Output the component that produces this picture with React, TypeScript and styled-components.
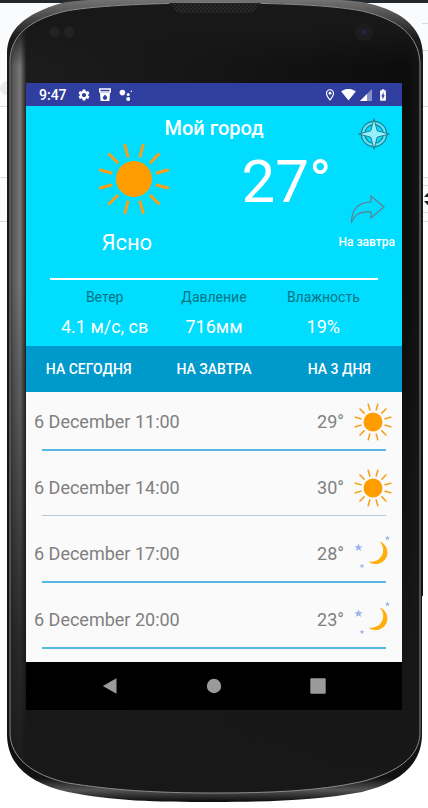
import React from "react";
import styled, { createGlobalStyle } from "styled-components";
import { MdSettings, MdOutlineLocationOn, MdSignalWifi4Bar, MdBatteryChargingFull } from "react-icons/md";

const GlobalStyle = createGlobalStyle`
  *, *::before, *::after { box-sizing: border-box; }
  body { margin: 0; background: #fff; font-family: Roboto, "Noto Sans", sans-serif; }
  button { font: inherit; color: inherit; border: 0; padding: 0; background: none; cursor: pointer; }
  svg { display: block; }
`;

const Device = styled.div`
  position: relative;
  min-height: 100vh;
  padding: 83px 26px 98px;
`;

const ShellArt = styled.svg`
  position: absolute;
  inset: 0;
  width: 100%;
  height: 100%;
`;

const Screen = styled.main`
  position: relative;
  display: flex;
  flex-direction: column;
  background: #fafafa;
`;

const StatusBar = styled.header`
  display: flex;
  align-items: center;
  justify-content: space-between;
  height: 23px;
  padding: 0 12px 0 13px;
  background: #303f9f;
  color: #fff;
`;

const StatusGroup = styled.div<{ $gap: number }>`
  display: flex;
  align-items: center;
  gap: ${(p) => p.$gap}px;
`;

const Clock = styled.time`
  font-size: 14px;
  font-weight: 500;
  line-height: 20px;
  margin-right: 2px;
`;

const Hero = styled.section`
  background: #00ddff;
  color: #fff;
`;

const Current = styled.div`
  display: grid;
  grid-template-columns: 220fr 84fr 72fr;
  grid-template-rows: 37px 135px;
`;

const City = styled.h1`
  grid-area: 1 / 1 / 2 / 4;
  margin: 0;
  padding-top: 8px;
  font-size: 20px;
  font-weight: 500;
  line-height: 28px;
  text-align: center;
`;

const Condition = styled.div`
  grid-area: 2 / 1;
  display: flex;
  flex-direction: column;
  align-items: center;
  gap: 14px;
`;

const ConditionName = styled.p`
  margin: 0;
  padding-right: 14px;
  font-size: 22px;
  line-height: 28px;
`;

const Temperature = styled.p`
  grid-area: 2 / 2;
  margin: 0;
  font-size: 60px;
  line-height: 78px;
  text-align: center;
  white-space: nowrap;
`;

const Actions = styled.div`
  grid-area: 1 / 3 / 3 / 4;
  display: flex;
  flex-direction: column;
  align-items: center;
  gap: 44px;
  padding-top: 12px;
`;

const LocateButton = styled.button`
  align-self: flex-end;
  margin-right: 12px;
`;

const TomorrowButton = styled.button`
  display: flex;
  flex-direction: column;
  align-items: center;
  gap: 10px;
  font-size: 12px;
  font-weight: 500;
  line-height: 16px;
  white-space: nowrap;
`;

const Stats = styled.dl`
  display: grid;
  grid-template-columns: repeat(3, 1fr);
  margin: 0 24px;
  padding: 7px 0;
  border-top: 2px solid #fff;
  text-align: center;
`;

const Stat = styled.div`
  white-space: nowrap;
`;

const StatLabel = styled.dt`
  color: #077484;
  font-size: 14px;
  line-height: 20px;
`;

const StatValue = styled.dd`
  margin: 8px 0 0;
  font-size: 18px;
  line-height: 24px;
`;

const Tabs = styled.nav`
  display: grid;
  grid-template-columns: repeat(3, 1fr);
  height: 46px;
  background: #0099cc;
`;

const Tab = styled.button`
  color: #fff;
  font-size: 14px;
  font-weight: 500;
  line-height: 20px;
`;

const Forecast = styled.ul`
  list-style: none;
  margin: 0;
  padding: 0 0 6px;
`;

const ForecastItem = styled.li`
  height: 66px;
`;

const ForecastRow = styled.div`
  display: flex;
  align-items: center;
  height: 57px;
  padding: 2px 10px 0 8px;
  color: #808080;
  font-size: 18px;
  line-height: 24px;
`;

const Moment = styled.time`
  flex: 1;
`;

const Degrees = styled.span`
  margin-right: 10px;
`;

const Rule = styled.div<{ $soft: boolean }>`
  height: ${(p) => (p.$soft ? 1 : 2)}px;
  margin: 0 16px;
  background: ${(p) => (p.$soft ? "#b4cbd8" : "#58b9e0")};
`;

const NavBar = styled.footer`
  display: flex;
  justify-content: center;
  height: 48px;
  background: #000;
`;

const NavButton = styled.button`
  display: grid;
  place-items: center;
  width: 104px;
`;

const Sun = ({ size }: { size: number }) => (
  <svg width={size} height={size} viewBox="0 0 72 72" aria-hidden="true">
    <circle cx="36" cy="36" r="18" fill="#ff9d00" />
    <g stroke="#f5a01c" strokeWidth="3">
      {Array.from({ length: 12 }, (_, i) => (
        <line key={i} x1="36" y1="0" x2="36" y2="13.5" transform={`rotate(${15 + i * 30} 36 36)`} />
      ))}
    </g>
  </svg>
);

const STAR = "M0-5 L1.3-1.6 L5-1.5 L2.1.7 L3.1 4.2 L0 2.2 L-3.1 4.2 L-2.1.7 L-5-1.5 L-1.3-1.6Z";

const Moon = ({ size }: { size: number }) => (
  <svg width={size} height={size} viewBox="0 0 38 38" aria-hidden="true">
    <path d="M25.5 6.5 A11.6 11.6 0 1 1 14.5 26.5 A11.8 11.8 0 0 0 25.5 6.5Z" fill="#ffae0a" />
    <g fill="#9cb2ec">
      <path d={STAR} transform="translate(4.5 12.5) scale(.85)" />
      <path d={STAR} transform="translate(33.5 3) scale(.52)" />
      <path d={STAR} transform="translate(8 31) scale(.5)" />
    </g>
  </svg>
);

const Compass = () => (
  <svg width="32" height="32" viewBox="0 0 32 32" aria-hidden="true">
    <circle cx="16" cy="16" r="11" fill="none" stroke="#17808f" strokeWidth="4.5" />
    <circle cx="16" cy="16" r="11" fill="none" stroke="#62e3f5" strokeWidth="2.2" />
    <path
      d="M16 .6 L19.2 12.8 L31.4 16 L19.2 19.2 L16 31.4 L12.8 19.2 L.6 16 L12.8 12.8Z"
      fill="#96f0fc"
      stroke="#23808f"
      strokeWidth="1"
      strokeLinejoin="round"
    />
  </svg>
);

const ForwardArrow = () => (
  <svg width="36" height="30" viewBox="0 0 36 30" aria-hidden="true">
    <path
      d="M2.5 28.5 C2.5 16 9 8.5 22 8 L22 2 L35 13 L22 24 L22 18 C11.5 17.5 6 19.5 2.5 28.5Z"
      fill="none"
      stroke="#607f8d"
      strokeWidth="1.2"
      strokeLinejoin="miter"
    />
  </svg>
);

const JarIcon = () => (
  <svg width="12" height="14" viewBox="0 0 12 14" aria-hidden="true">
    <path d="M.8 1 H11.2 V4 H.8Z" fill="none" stroke="#fff" strokeWidth="1.5" />
    <path fillRule="evenodd" d="M1 5 H11 L10.4 13 H1.6Z M6 6.5 L8 9 A2.1 2.1 0 1 1 4 9Z" fill="#fff" />
  </svg>
);

const AssistantIcon = () => (
  <svg width="14" height="14" viewBox="0 0 14 14" aria-hidden="true" fill="#fff">
    <circle cx="3.4" cy="4.6" r="2.8" />
    <circle cx="9.2" cy="6.4" r="1.5" />
    <circle cx="9.2" cy="11" r="2" />
    <circle cx="12.4" cy="3.2" r=".8" />
  </svg>
);

const SignalIcon = () => (
  <svg width="12" height="12" viewBox="0 0 12 12" aria-hidden="true">
    <path d="M0 12 L12 0 V12Z" fill="#8790c8" />
    <path d="M0 12 L7 5 V12Z" fill="#fff" />
  </svg>
);

const BODY =
  "M7 54 C7 30 24 14 62 3 C88 -2 150 -2 214 -2 C285 -2 335 -2 362 2 C398 9 423 25 423 56 V596 H422 V734 C422 766 398 783 362 792 C318 800 270 802 214 802 C155 802 112 801 68 792 C28 783 7 764 7 734Z";
const FACE =
  "M10 60 C11 36 28 20 66 11 C100 5 160 3 214 3 C280 3 330 5 362 11 C400 20 418 36 420 62 V734 C419 757 397 773 360 782 C318 791 270 793 214 793 C155 793 112 790 68 783 C31 775 11 757 10 734Z";

const Shell = () => (
  <ShellArt viewBox="0 0 428 808" preserveAspectRatio="none" aria-hidden="true">
    <defs>
      <linearGradient id="side" x1="0" x2="1">
        <stop offset="0" stopColor="#222" />
        <stop offset=".006" stopColor="#555" />
        <stop offset=".025" stopColor="#777" />
        <stop offset=".04" stopColor="#1c1c1c" />
        <stop offset=".5" stopColor="#151515" />
        <stop offset=".97" stopColor="#0c0c0c" />
        <stop offset="1" stopColor="#151515" />
      </linearGradient>
      <linearGradient id="shade" x1="0" y1="0" x2="0" y2="1">
        <stop offset="0" stopColor="#181818" />
        <stop offset=".03" stopColor="#181818" />
        <stop offset=".08" stopColor="#181818" stopOpacity="0" />
        <stop offset=".35" stopColor="#181818" stopOpacity="0" />
        <stop offset=".8" stopColor="#181818" stopOpacity=".8" />
        <stop offset="1" stopColor="#181818" />
      </linearGradient>
      <linearGradient id="rim" x1="0" y1="0" x2="0" y2="1">
        <stop offset="0" stopColor="#777" />
        <stop offset=".05" stopColor="#1a1a1a" />
        <stop offset=".97" stopColor="#111" />
        <stop offset=".985" stopColor="#555" />
        <stop offset="1" stopColor="#0a0a0a" />
      </linearGradient>
      <pattern id="mesh" width="4" height="4" patternUnits="userSpaceOnUse">
        <rect width="4" height="4" fill="#292929" />
        <circle cx="1" cy="1" r="1" fill="#161616" />
        <circle cx="3" cy="3" r="1" fill="#161616" />
      </pattern>
    </defs>
    <rect width="428" height="222" fill="#fafbfc" />
    <rect y="107" width="428" height="70" fill="#fff" />
    <rect width="428" height="3" fill="#24292e" />
    <circle cx="7" cy="88" r="7" fill="#e9eaec" />
    <path
      d="M0 106.5H428M0 177.5H428M0 221.5H428M422 23.5H428M422 50.5H428M422 185.5H428M422 212.5H428"
      stroke="#d8dadd"
    />
    <path d="M424 197 L427.5 193 L431 197Z M424 201 L427.5 205 L431 201Z" fill="#222" />
    <path d={BODY} fill="url(#rim)" />
    <path d={FACE} fill="url(#side)" />
    <path d={FACE} fill="url(#shade)" />
    <path d={FACE} fill="none" stroke="#8c8c8c" strokeWidth="1" />
    <path d="M168 3 C174 4 173 13 181 13 H249 C257 13 256 4 262 3Z" fill="url(#mesh)" />
    <circle cx="54.5" cy="32" r="5.5" fill="#222" />
    <circle cx="69" cy="32" r="5.5" fill="#222" />
    <circle cx="364" cy="32" r="9" fill="#1d1d1d" />
    <circle cx="364" cy="32" r="4" fill="#201f28" />
    <circle cx="364" cy="32" r="1.5" fill="#302c50" />
  </ShellArt>
);

const stats = [
  { label: "Ветер", value: "4.1 м/с, св" },
  { label: "Давление", value: "716мм" },
  { label: "Влажность", value: "19%" },
];

const tabs = ["НА СЕГОДНЯ", "НА ЗАВТРА", "НА 3 ДНЯ"];

const forecast = [
  { time: "6 December 11:00", temp: "29°", Icon: Sun, soft: false },
  { time: "6 December 14:00", temp: "30°", Icon: Sun, soft: true },
  { time: "6 December 17:00", temp: "28°", Icon: Moon, soft: false },
  { time: "6 December 20:00", temp: "23°", Icon: Moon, soft: false },
];

export default function App() {
  return (
    <>
      <GlobalStyle />
      <Device>
        <Shell />
        <Screen>
          <StatusBar>
            <StatusGroup $gap={8}>
              <Clock>9:47</Clock>
              <MdSettings size={14} />
              <JarIcon />
              <AssistantIcon />
            </StatusGroup>
            <StatusGroup $gap={4}>
              <MdOutlineLocationOn size={14} />
              <MdSignalWifi4Bar size={15} />
              <SignalIcon />
              <MdBatteryChargingFull size={14} />
            </StatusGroup>
          </StatusBar>

          <Hero>
            <Current>
              <City>Мой город</City>
              <Condition>
                <Sun size={72} />
                <ConditionName>Ясно</ConditionName>
              </Condition>
              <Temperature>27°</Temperature>
              <Actions>
                <LocateButton type="button" aria-label="Моё местоположение">
                  <Compass />
                </LocateButton>
                <TomorrowButton type="button">
                  <ForwardArrow />
                  На завтра
                </TomorrowButton>
              </Actions>
            </Current>
            <Stats>
              {stats.map((s) => (
                <Stat key={s.label}>
                  <StatLabel>{s.label}</StatLabel>
                  <StatValue>{s.value}</StatValue>
                </Stat>
              ))}
            </Stats>
          </Hero>

          <Tabs>
            {tabs.map((t) => (
              <Tab key={t} type="button">
                {t}
              </Tab>
            ))}
          </Tabs>

          <Forecast>
            {forecast.map(({ time, temp, Icon, soft }) => (
              <ForecastItem key={time}>
                <ForecastRow>
                  <Moment>{time}</Moment>
                  <Degrees>{temp}</Degrees>
                  <Icon size={38} />
                </ForecastRow>
                <Rule $soft={soft} />
              </ForecastItem>
            ))}
          </Forecast>

          <NavBar>
            <NavButton type="button" aria-label="Назад">
              <svg width="16" height="18" viewBox="0 0 16 18">
                <path d="M.8 9 L14.5 1.2 V16.8Z" fill="#9a9a9a" />
              </svg>
            </NavButton>
            <NavButton type="button" aria-label="Домой">
              <svg width="16" height="16" viewBox="0 0 16 16">
                <circle cx="8" cy="8" r="7.2" fill="#9a9a9a" />
              </svg>
            </NavButton>
            <NavButton type="button" aria-label="Недавние">
              <svg width="16" height="16" viewBox="0 0 16 16">
                <rect x=".3" y=".3" width="15.4" height="15.4" rx="1" fill="#9a9a9a" />
              </svg>
            </NavButton>
          </NavBar>
        </Screen>
      </Device>
    </>
  );
}
